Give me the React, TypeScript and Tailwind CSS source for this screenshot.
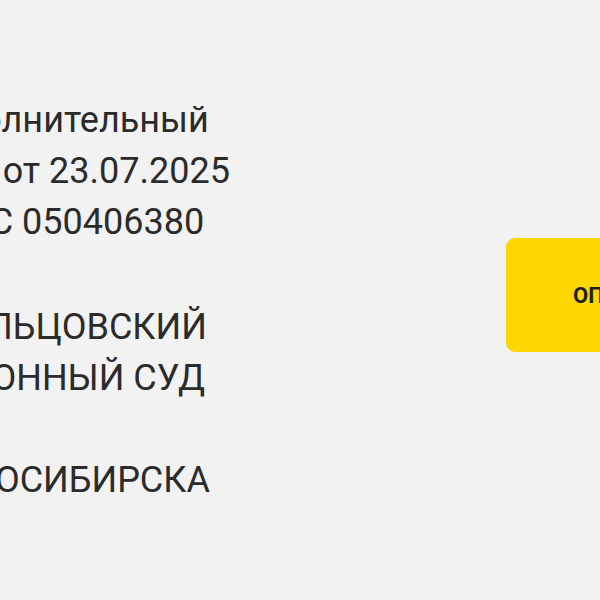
import React from "react";

const Detail: React.FC<{ lines: string[]; className?: string }> = ({ lines, className }) => (
  <div className={`flex flex-col ${className ?? ""}`}>
    {lines.map((line, i) => (
      <p key={i} className="h-[51px] leading-[51px] whitespace-nowrap">
        {line}
      </p>
    ))}
  </div>
);

export default function App() {
  return (
    <div
      className="w-[600px] h-[600px] overflow-hidden bg-[#f2f2f2] text-[#2b2b2b]"
      style={{ fontFamily: "Roboto, 'Noto Sans', sans-serif" }}
    >
      <div className="flex items-start pt-[95px]">
        <div className="-ml-[78px] flex w-[400px] flex-col gap-[54px] text-[36px]">
          <Detail className="-ml-[6px]" lines={["Исполнительный", "лист от 23.07.2025", "№ ФС 050406380"]} />
          <Detail lines={["ЗАЕЛЬЦОВСКИЙ", "РАЙОННЫЙ СУД", "Г.", "НОВОСИБИРСКА"]} />
        </div>
        <div className="ml-auto mt-[143px] -mr-[200px] flex h-[114px] w-[294px] items-center rounded-[9px] bg-[#ffd600] pl-[67px] text-[22px] font-bold text-[#1f1f1f]">
          ОПЛАТИТЬ
        </div>
      </div>
    </div>
  );
}
